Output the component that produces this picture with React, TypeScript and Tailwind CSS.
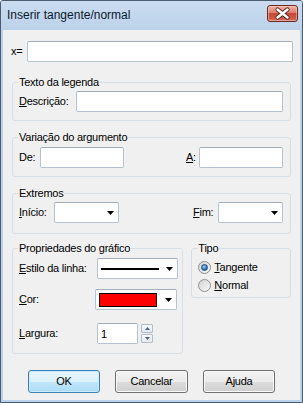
import React from 'react';

const inputCls =
  'h-[21px] bg-white border border-[#b7c2cf] border-t-[#a3adb9] rounded-[2px] px-[3px] text-[11px] text-black outline-none';

const groupCls = 'border border-[#d5dfe5] rounded-[3px] min-w-0';

const Arrow = () => (
  <svg width="7" height="4" viewBox="0 0 7 4" className="shrink-0">
    <path d="M0 0H7L3.5 4Z" fill="#000" />
  </svg>
);

const Combo = ({ className = '', children }: { className?: string; children?: React.ReactNode }) => (
  <div className={`h-[21px] bg-white border border-[#b7c2cf] border-t-[#a3adb9] rounded-[2px] flex items-center pl-[3px] pr-[4px] ${className}`}>
    <div className="flex-1 flex items-center">{children}</div>
    <Arrow />
  </div>
);

const Key = ({ children }: { children: React.ReactNode }) => <span className="underline underline-offset-[1px]">{children}</span>;

const SpinBtn = ({ up }: { up?: boolean }) => (
  <div className="w-[12px] h-[9px] border border-[#b0bccb] rounded-[1px] bg-[linear-gradient(#f7f9fc,#e4e9f0)] flex items-center justify-center">
    <svg width="5" height="3" viewBox="0 0 5 3">
      <path d={up ? 'M0 3H5L2.5 0Z' : 'M0 0H5L2.5 3Z'} fill="#4d6185" />
    </svg>
  </div>
);

const Radio = ({ checked }: { checked?: boolean }) => (
  <div className="w-[13px] h-[13px] rounded-full border border-[#8e8f8f] bg-[linear-gradient(135deg,#d4d4d4,#f8f8f8)] flex items-center justify-center shrink-0">
    {checked && (
      <div className="w-[7px] h-[7px] rounded-full bg-[radial-gradient(circle_at_40%_35%,#a6d8fb,#2a73b8_60%,#124a85)] border border-[#1d4f80]" />
    )}
  </div>
);

const Btn = ({ label, def, w }: { label: string; def?: boolean; w: string }) => (
  <button
    className={`${w} h-[23px] rounded-[3px] border text-[11px] text-black ${
      def
        ? 'border-[#3c7fb1] bg-[linear-gradient(#e8f6fd_0%,#dbf1fc_50%,#c2e7fc_50%,#abdaf5_100%)] shadow-[inset_0_0_0_1px_#c9ebfd]'
        : 'border-[#707070] bg-[linear-gradient(#f2f2f2_0%,#ebebeb_50%,#dddddd_50%,#cfcfcf_100%)] shadow-[inset_0_0_0_1px_#fbfbfb]'
    }`}
  >
    {label}
  </button>
);

export default function App() {
  return (
    <div className="w-[303px] h-[403px] flex flex-col border border-[#4a5b70] rounded-t-[3px] bg-[#bcd2ea] font-['Liberation_Sans',Arial,sans-serif] text-[11px] text-black leading-[13px] overflow-hidden">
      {/* Barra de título */}
      <div className="h-[29px] flex justify-between pl-[6px] pr-[4px] bg-[linear-gradient(#cadcf0,#bcd2ea)] shrink-0">
        <span className="self-center text-[12px] leading-[15px] text-[#0b1a2c] mt-[-1px]">Inserir tangente/normal</span>
        <div className="relative mt-[4px] w-[31px] h-[17px] rounded-[3px] border border-[#6b2a24] bg-[linear-gradient(#eeb3a5,#dc7f6b_45%,#c74b37_50%,#cd5a45_85%,#d97a66)] shadow-[inset_0_0_0_1px_rgba(255,220,210,0.45)]">
          <svg width="29" height="15" viewBox="0 0 29 15" className="absolute left-0 top-0">
            <path d="M9.5 3.5L19.5 11.5M19.5 3.5L9.5 11.5" stroke="#5a2a26" strokeWidth="4.2" strokeLinecap="round" />
            <path d="M9.5 3.5L19.5 11.5M19.5 3.5L9.5 11.5" stroke="#ffffff" strokeWidth="2.4" strokeLinecap="round" />
          </svg>
        </div>
      </div>

      {/* Área cliente */}
      <div className="flex-1 mx-[2px] mb-[2px] bg-[#f0f0f0] flex flex-col tracking-[-0.25px]">
        <div className="flex items-center mt-[11px] ml-[8px]">
          <span className="w-[16px]">x=</span>
          <input readOnly className={`${inputCls} w-[266px]`} />
        </div>

        <fieldset className={`${groupCls} mx-[9px] mt-[14px] pl-[6px] pr-[7px] pt-[2px] pb-[8px]`}>
          <legend className="ml-[-1px] px-[1px] leading-[13px]">Texto da legenda</legend>
          <div className="flex items-center">
            <span className="w-[57px]"><Key>D</Key>escrição:</span>
            <input readOnly className={`${inputCls} flex-1 min-w-0`} />
          </div>
        </fieldset>

        <fieldset className={`${groupCls} mx-[9px] mt-[10px] pl-[6px] pr-[7px] pt-[3px] pb-[8px]`}>
          <legend className="ml-[-1px] px-[1px] leading-[13px]">Variação do argumento</legend>
          <div className="flex items-center justify-between">
            <div className="flex items-center">
              <span className="w-[21px]">De:</span>
              <input readOnly className={`${inputCls} w-[84px]`} />
            </div>
            <div className="flex items-center">
              <span className="w-[13px]"><Key>A</Key>:</span>
              <input readOnly className={`${inputCls} w-[84px]`} />
            </div>
          </div>
        </fieldset>

        <fieldset className={`${groupCls} mx-[9px] mt-[10px] pl-[6px] pr-[7px] pt-[2px] pb-[10px]`}>
          <legend className="ml-[-1px] px-[1px] leading-[13px]">Extremos</legend>
          <div className="flex items-center justify-between">
            <div className="flex items-center">
              <span className="w-[35px]"><Key>I</Key>nício:</span>
              <Combo className="w-[65px]" />
            </div>
            <div className="flex items-center">
              <span className="w-[25px]"><Key>F</Key>im:</span>
              <Combo className="w-[65px]" />
            </div>
          </div>
        </fieldset>

        <div className="flex items-start mx-[9px] mt-[8px] gap-[8px]">
          <fieldset className={`${groupCls} w-[172px] pl-[6px] pt-[3px] pb-[9px]`}>
            <legend className="ml-[-1px] px-[1px] leading-[13px]">Propriedades do gráfico</legend>
            <div className="flex items-center">
              <span className="w-[78px]"><Key>E</Key>stilo da linha:</span>
              <Combo className="w-[81px]">
                <div className="w-[58px] h-[2px] bg-black" />
              </Combo>
            </div>
            <div className="flex items-center mt-[10px]">
              <span className="w-[76px]"><Key>C</Key>or:</span>
              <Combo className="w-[82px]">
                <div className="w-[58px] h-[14px] bg-[#ff0000] border border-black" />
              </Combo>
            </div>
            <div className="flex items-center mt-[13px]">
              <span className="w-[78px]"><Key>L</Key>argura:</span>
              <input readOnly defaultValue="1" className={`${inputCls} w-[41px]`} />
              <div className="flex flex-col gap-[1px] ml-[3px]">
                <SpinBtn up />
                <SpinBtn />
              </div>
            </div>
          </fieldset>

          <fieldset className={`${groupCls} w-[100px] pl-[6px] pt-[3px] pb-[3px]`}>
            <legend className="ml-[-1px] px-[1px] leading-[13px]">Tipo</legend>
            <div className="flex items-center h-[18px] gap-[3px]">
              <Radio checked />
              <span><Key>T</Key>angente</span>
            </div>
            <div className="flex items-center h-[18px] gap-[3px]">
              <Radio />
              <span><Key>N</Key>ormal</span>
            </div>
          </fieldset>
        </div>

        <div className="flex justify-center gap-[15px] mt-[16px]">
          <Btn label="OK" def w="w-[72px]" />
          <Btn label="Cancelar" w="w-[73px]" />
          <Btn label="Ajuda" w="w-[72px]" />
        </div>
      </div>
    </div>
  );
}
